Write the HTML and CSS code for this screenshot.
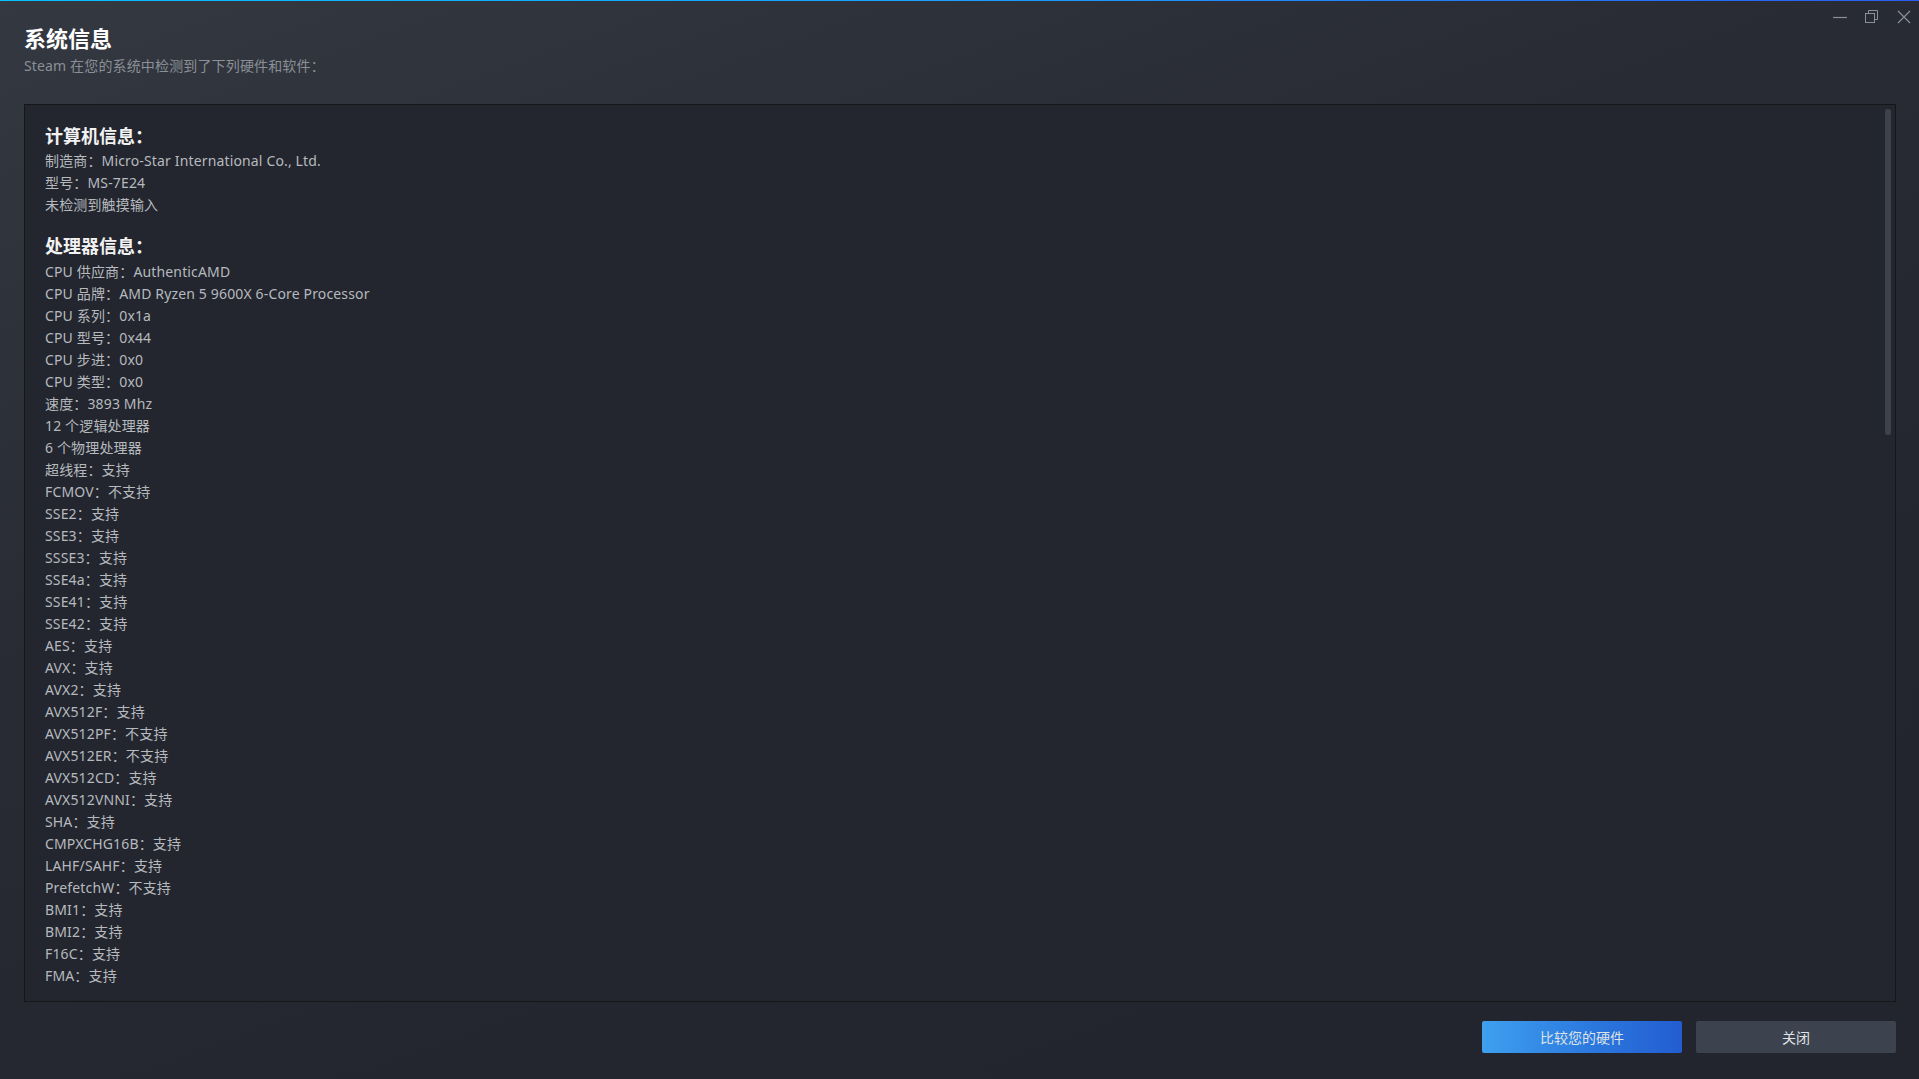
FILE: index.html
```html
<!DOCTYPE html>
<html lang="zh-CN">
<head>
<meta charset="utf-8">
<title>系统信息</title>
<link rel="stylesheet" href="styles.css">
</head>
<body>
<div class="window">
  <div class="controls">
    <svg class="ctl" width="14" height="14" viewBox="0 0 14 14"><path d="M0 7.5H14" stroke="#8a9098" stroke-width="1.2"/></svg>
    <svg class="ctl" width="14" height="14" viewBox="0 0 14 14"><rect x="0.5" y="3.5" width="9" height="9" fill="none" stroke="#8a9098"/><path d="M3.5 3.5V0.5H12.5V9.5H9.5" fill="none" stroke="#8a9098"/></svg>
    <svg class="ctl" width="14" height="14" viewBox="0 0 14 14"><path d="M1 1L13 13M13 1L1 13" stroke="#8a9098" stroke-width="1.2"/></svg>
  </div>
  <header class="header">
    <h1 class="title">系统信息</h1>
    <p class="subtitle">Steam 在您的系统中检测到了下列硬件和软件：</p>
  </header>
  <section class="panel">
    <div class="scrollthumb"></div>
    <div class="content">
      <h2 class="section-title">计算机信息：</h2>
      <div class="row">制造商：Micro-Star International Co., Ltd.</div>
      <div class="row">型号：MS-7E24</div>
      <div class="row">未检测到触摸输入</div>

      <h2 class="section-title second">处理器信息：</h2>
      <div class="row">CPU 供应商：AuthenticAMD</div>
      <div class="row">CPU 品牌：AMD Ryzen 5 9600X 6-Core Processor</div>
      <div class="row">CPU 系列：0x1a</div>
      <div class="row">CPU 型号：0x44</div>
      <div class="row">CPU 步进：0x0</div>
      <div class="row">CPU 类型：0x0</div>
      <div class="row">速度：3893 Mhz</div>
      <div class="row">12 个逻辑处理器</div>
      <div class="row">6 个物理处理器</div>
      <div class="row">超线程：支持</div>
      <div class="row">FCMOV：不支持</div>
      <div class="row">SSE2：支持</div>
      <div class="row">SSE3：支持</div>
      <div class="row">SSSE3：支持</div>
      <div class="row">SSE4a：支持</div>
      <div class="row">SSE41：支持</div>
      <div class="row">SSE42：支持</div>
      <div class="row">AES：支持</div>
      <div class="row">AVX：支持</div>
      <div class="row">AVX2：支持</div>
      <div class="row">AVX512F：支持</div>
      <div class="row">AVX512PF：不支持</div>
      <div class="row">AVX512ER：不支持</div>
      <div class="row">AVX512CD：支持</div>
      <div class="row">AVX512VNNI：支持</div>
      <div class="row">SHA：支持</div>
      <div class="row">CMPXCHG16B：支持</div>
      <div class="row">LAHF/SAHF：支持</div>
      <div class="row">PrefetchW：不支持</div>
      <div class="row">BMI1：支持</div>
      <div class="row">BMI2：支持</div>
      <div class="row">F16C：支持</div>
      <div class="row">FMA：支持</div>
    </div>
  </section>
  <footer class="footer">
    <button class="btn btn-primary">比较您的硬件</button>
    <button class="btn btn-secondary">关闭</button>
  </footer>
</div>
</body>
</html>
```

FILE: styles.css
```css
* { box-sizing: border-box; }
html, body {
  margin: 0;
  padding: 0;
  height: 100%;
}
body {
  font-family: "Noto Sans", "Noto Sans CJK SC", sans-serif;
  background: #23262e;
  overflow: hidden;
}
.window {
  position: relative;
  height: 1079px;
  display: flex;
  flex-direction: column;
  padding: 0 23px 0 24px;
  border-top: 1px solid;
  border-image: linear-gradient(90deg, #05c2ff 0%, #1a9fff 50%, #2a5ef0 100%) 1;
  background: linear-gradient(160deg, #343840 0%, #292c34 35%, #23262e 70%, #22252d 100%);
}
.controls {
  position: absolute;
  top: 9px;
  right: 8px;
  display: flex;
  gap: 18px;
}
.ctl { display: block; }
.header {
  padding-top: 22px;
}
.title {
  margin: 0;
  font-size: 22px;
  line-height: 28px;
  font-weight: 700;
  color: #ffffff;
  font-family: "Noto Sans CJK SC", sans-serif;
}
.subtitle {
  margin: 5px 0 0;
  font-size: 14px;
  line-height: 20px;
  letter-spacing: 0.15px;
  color: #8a9098;
}
.panel {
  position: relative;
  margin-top: 28px;
  flex: 1;
  background: #23262f;
  border: 1px solid #15171b;
  overflow: hidden;
}
.scrollthumb {
  position: absolute;
  top: 4px;
  right: 4px;
  width: 6px;
  height: 326px;
  border-radius: 3px;
  background: #3d424c;
}
.content {
  padding: 18px 20px 0;
}
.section-title {
  margin: 0 0 3px;
  font-size: 18px;
  line-height: 24px;
  font-weight: 700;
  color: #f2f2f2;
  font-family: "Noto Sans CJK SC", sans-serif;
}
.section-title.second {
  margin-top: 17px;
  margin-bottom: 4px;
}
.row {
  font-size: 14px;
  line-height: 22px;
  letter-spacing: 0.15px;
  color: #b6babe;
  white-space: nowrap;
}
.footer {
  display: flex;
  justify-content: flex-end;
  gap: 14px;
  margin-top: 19px;
  margin-bottom: 26px;
}
.btn {
  width: 200px;
  height: 32px;
  border: none;
  border-radius: 2px;
  font-family: "Noto Sans CJK SC", sans-serif;
  font-size: 14px;
  color: #dfe3e6;
  padding: 0;
  cursor: pointer;
}
.btn-primary {
  background: linear-gradient(90deg, #3ea0ef 0%, #2b78de 55%, #235dd0 100%);
}
.btn-secondary {
  background: #3d434e;
}
```
